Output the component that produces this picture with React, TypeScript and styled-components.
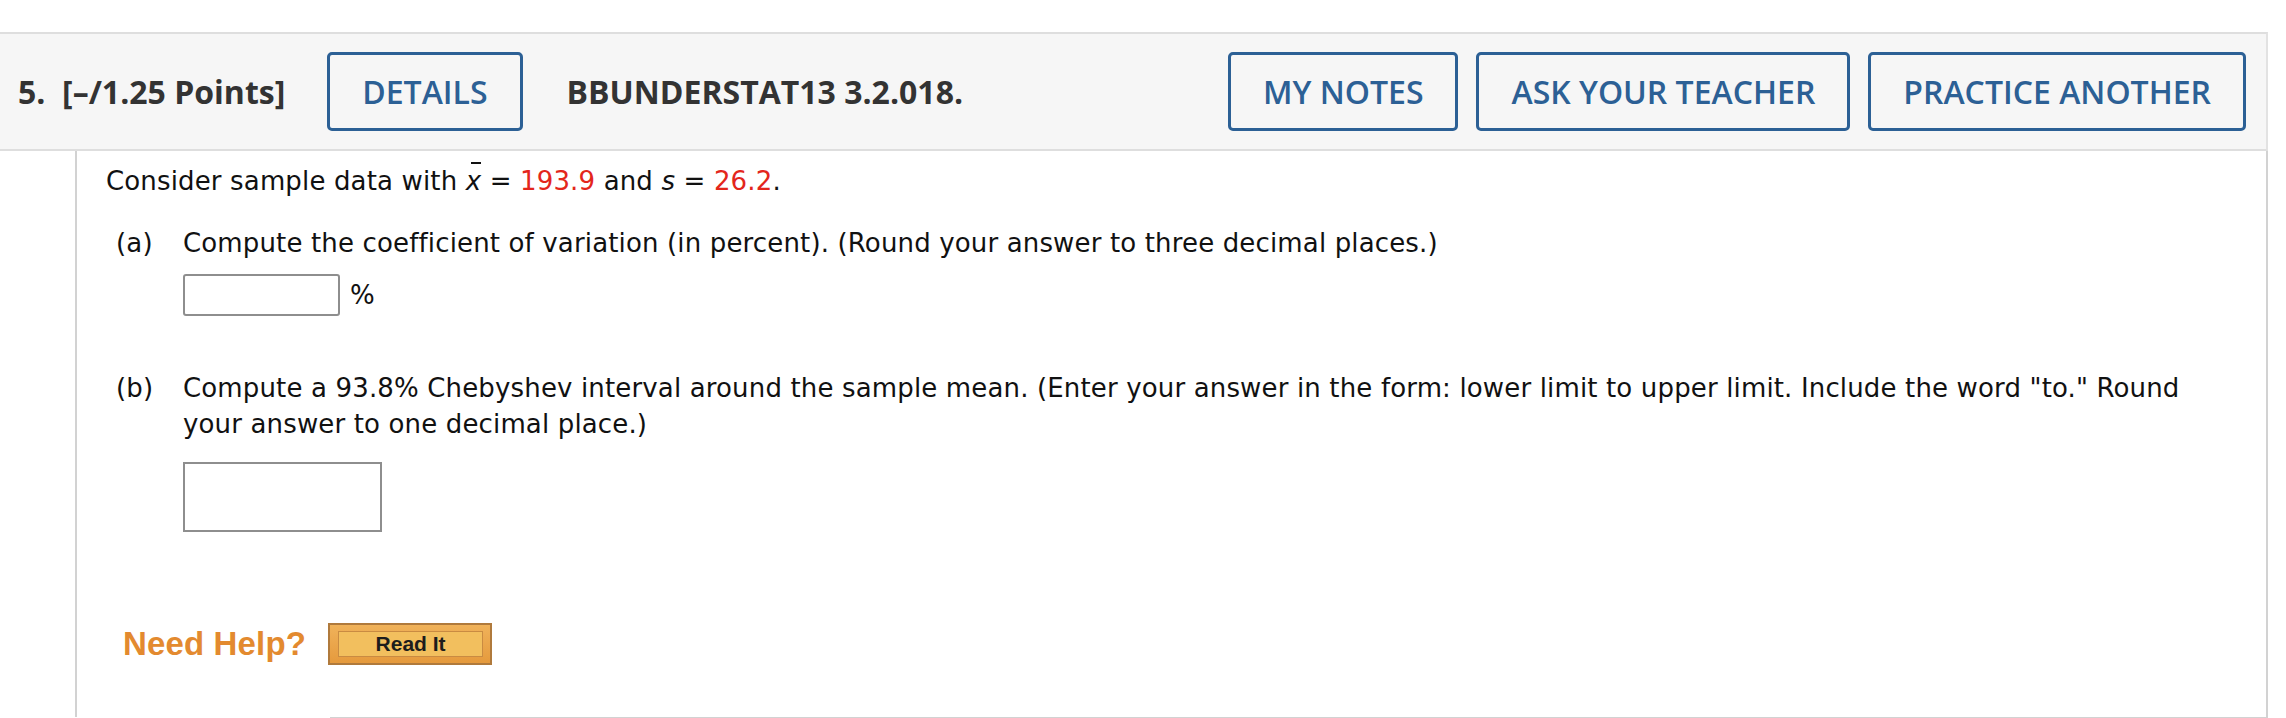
import styled, { createGlobalStyle } from 'styled-components';

const GlobalStyle = createGlobalStyle`
  html, body {
    margin: 0;
    padding: 0;
    background: #ffffff;
  }
  * {
    box-sizing: border-box;
  }
`;

const App = () => {
  return (
    <Page>
      <GlobalStyle />
      <QuestionHeader>
        <PointsLabel>5.&nbsp; [–/1.25 Points]</PointsLabel>
        <HeaderButton>DETAILS</HeaderButton>
        <QuestionCode>BBUNDERSTAT13 3.2.018.</QuestionCode>
        <HeaderActions>
          <HeaderButton>MY NOTES</HeaderButton>
          <HeaderButton>ASK YOUR TEACHER</HeaderButton>
          <HeaderButton>PRACTICE ANOTHER</HeaderButton>
        </HeaderActions>
      </QuestionHeader>

      <QuestionBody>
        <Intro>
          Consider sample data with <XBar>x</XBar> = <Given>193.9</Given> and{' '}
          <Var>s</Var> = <Given>26.2</Given>.
        </Intro>

        <PartList>
          <Part>
            <PartLabel>(a)</PartLabel>
            <PartContent>
              <PartText>
                Compute the coefficient of variation (in percent). (Round your answer to three
                decimal places.)
              </PartText>
              <AnswerRow>
                <AnswerInput $width={157} $height={42} $rounded />
                <Unit>%</Unit>
              </AnswerRow>
            </PartContent>
          </Part>

          <Part>
            <PartLabel>(b)</PartLabel>
            <PartContent>
              <PartText>
                Compute a 93.8% Chebyshev interval around the sample mean. (Enter your answer in
                the form: lower limit to upper limit. Include the word "to." Round your answer to
                one decimal place.)
              </PartText>
              <AnswerRow $gap={20}>
                <AnswerInput $width={199} $height={70} />
              </AnswerRow>
            </PartContent>
          </Part>
        </PartList>

        <HelpRow>
          <NeedHelp>Need Help?</NeedHelp>
          <ReadItButton>
            <ReadItInner>Read It</ReadItInner>
          </ReadItButton>
        </HelpRow>
      </QuestionBody>
      <BottomRule />
    </Page>
  );
};

const Page = styled.div`
  width: 2268px;
  padding-top: 32px;
`;

const QuestionHeader = styled.div`
  display: flex;
  align-items: center;
  height: 119px;
  padding: 0 20px 0 18px;
  background-color: #f6f6f6;
  border-top: 2px solid #dedede;
  border-bottom: 2px solid #dedede;
  border-right: 2px solid #e2e2e2;
  font-family: 'Open Sans', 'Liberation Sans', sans-serif;
`;

const PointsLabel = styled.div`
  font-size: 32px;
  font-weight: 700;
  color: #333333;
  white-space: pre;
  margin-right: 42px;
`;

const QuestionCode = styled.div`
  font-size: 32px;
  font-weight: 700;
  color: #333333;
  margin-left: 44px;
`;

const HeaderActions = styled.div`
  display: flex;
  gap: 18px;
  margin-left: auto;
`;

const HeaderButton = styled.button`
  height: 79px;
  padding: 0 32px;
  background: transparent;
  border: 3px solid #2c6095;
  border-radius: 5px;
  color: #2c6095;
  font-family: 'Open Sans', 'Liberation Sans', sans-serif;
  font-size: 32px;
  font-weight: 600;
  cursor: pointer;
`;

const QuestionBody = styled.div`
  margin-left: 75px;
  padding: 12px 0 52px 29px;
  border-left: 2px solid #d2d2d2;
  border-right: 2px solid #d2d2d2;
  font-family: 'DejaVu Sans', Verdana, sans-serif;
  font-size: 26px;
  line-height: 36px;
  letter-spacing: 0.15px;
  color: #111111;
`;

const Intro = styled.p`
  margin: 0 0 26px;
`;

const Given = styled.span`
  color: #e3261c;
`;

const Var = styled.span`
  font-style: italic;
`;

const XBar = styled.span`
  position: relative;
  font-style: italic;

  &::before {
    content: '';
    position: absolute;
    left: 5px;
    right: 0;
    top: -4px;
    border-top: 2px solid #111111;
  }
`;

const PartList = styled.div`
  display: flex;
  flex-direction: column;
  gap: 54px;
  margin-left: 10px;
`;

const Part = styled.div`
  display: flex;
`;

const PartLabel = styled.div`
  width: 67px;
  flex-shrink: 0;
`;

const PartContent = styled.div`
  flex: 1;
  padding-right: 40px;
`;

const PartText = styled.p`
  margin: 0;
`;

const AnswerRow = styled.div<{ $gap?: number }>`
  display: flex;
  align-items: center;
  gap: 10px;
  margin-top: ${(p) => p.$gap ?? 13}px;
`;

const AnswerInput = styled.input.attrs({ type: 'text' })<{
  $width: number;
  $height: number;
  $rounded?: boolean;
}>`
  width: ${(p) => p.$width}px;
  height: ${(p) => p.$height}px;
  border: 2px solid #8e8e8e;
  border-radius: ${(p) => (p.$rounded ? '3px' : '0')};
  background: #ffffff;
  outline: none;
`;

const Unit = styled.span``;

const HelpRow = styled.div`
  display: flex;
  align-items: center;
  gap: 22px;
  margin: 91px 0 0 17px;
`;

const NeedHelp = styled.span`
  font-family: 'Liberation Sans', Arial, sans-serif;
  font-size: 33px;
  font-weight: 700;
  color: #e38a2f;
`;

const ReadItButton = styled.button`
  width: 164px;
  height: 42px;
  padding: 6px 7px 6px 8px;
  background: linear-gradient(#f0b25a, #e59a3d);
  border: 2px solid #b07a3c;
  cursor: pointer;
`;

const ReadItInner = styled.span`
  display: flex;
  align-items: center;
  justify-content: center;
  width: 100%;
  height: 100%;
  background: #f2bf5e;
  border: 1px solid #c98b42;
  font-family: 'Liberation Sans', Arial, sans-serif;
  font-size: 21px;
  font-weight: 700;
  color: #1c1c1c;
`;

const BottomRule = styled.div`
  height: 2px;
  margin-left: 330px;
  background: #d2d2d2;
`;

export default App;
